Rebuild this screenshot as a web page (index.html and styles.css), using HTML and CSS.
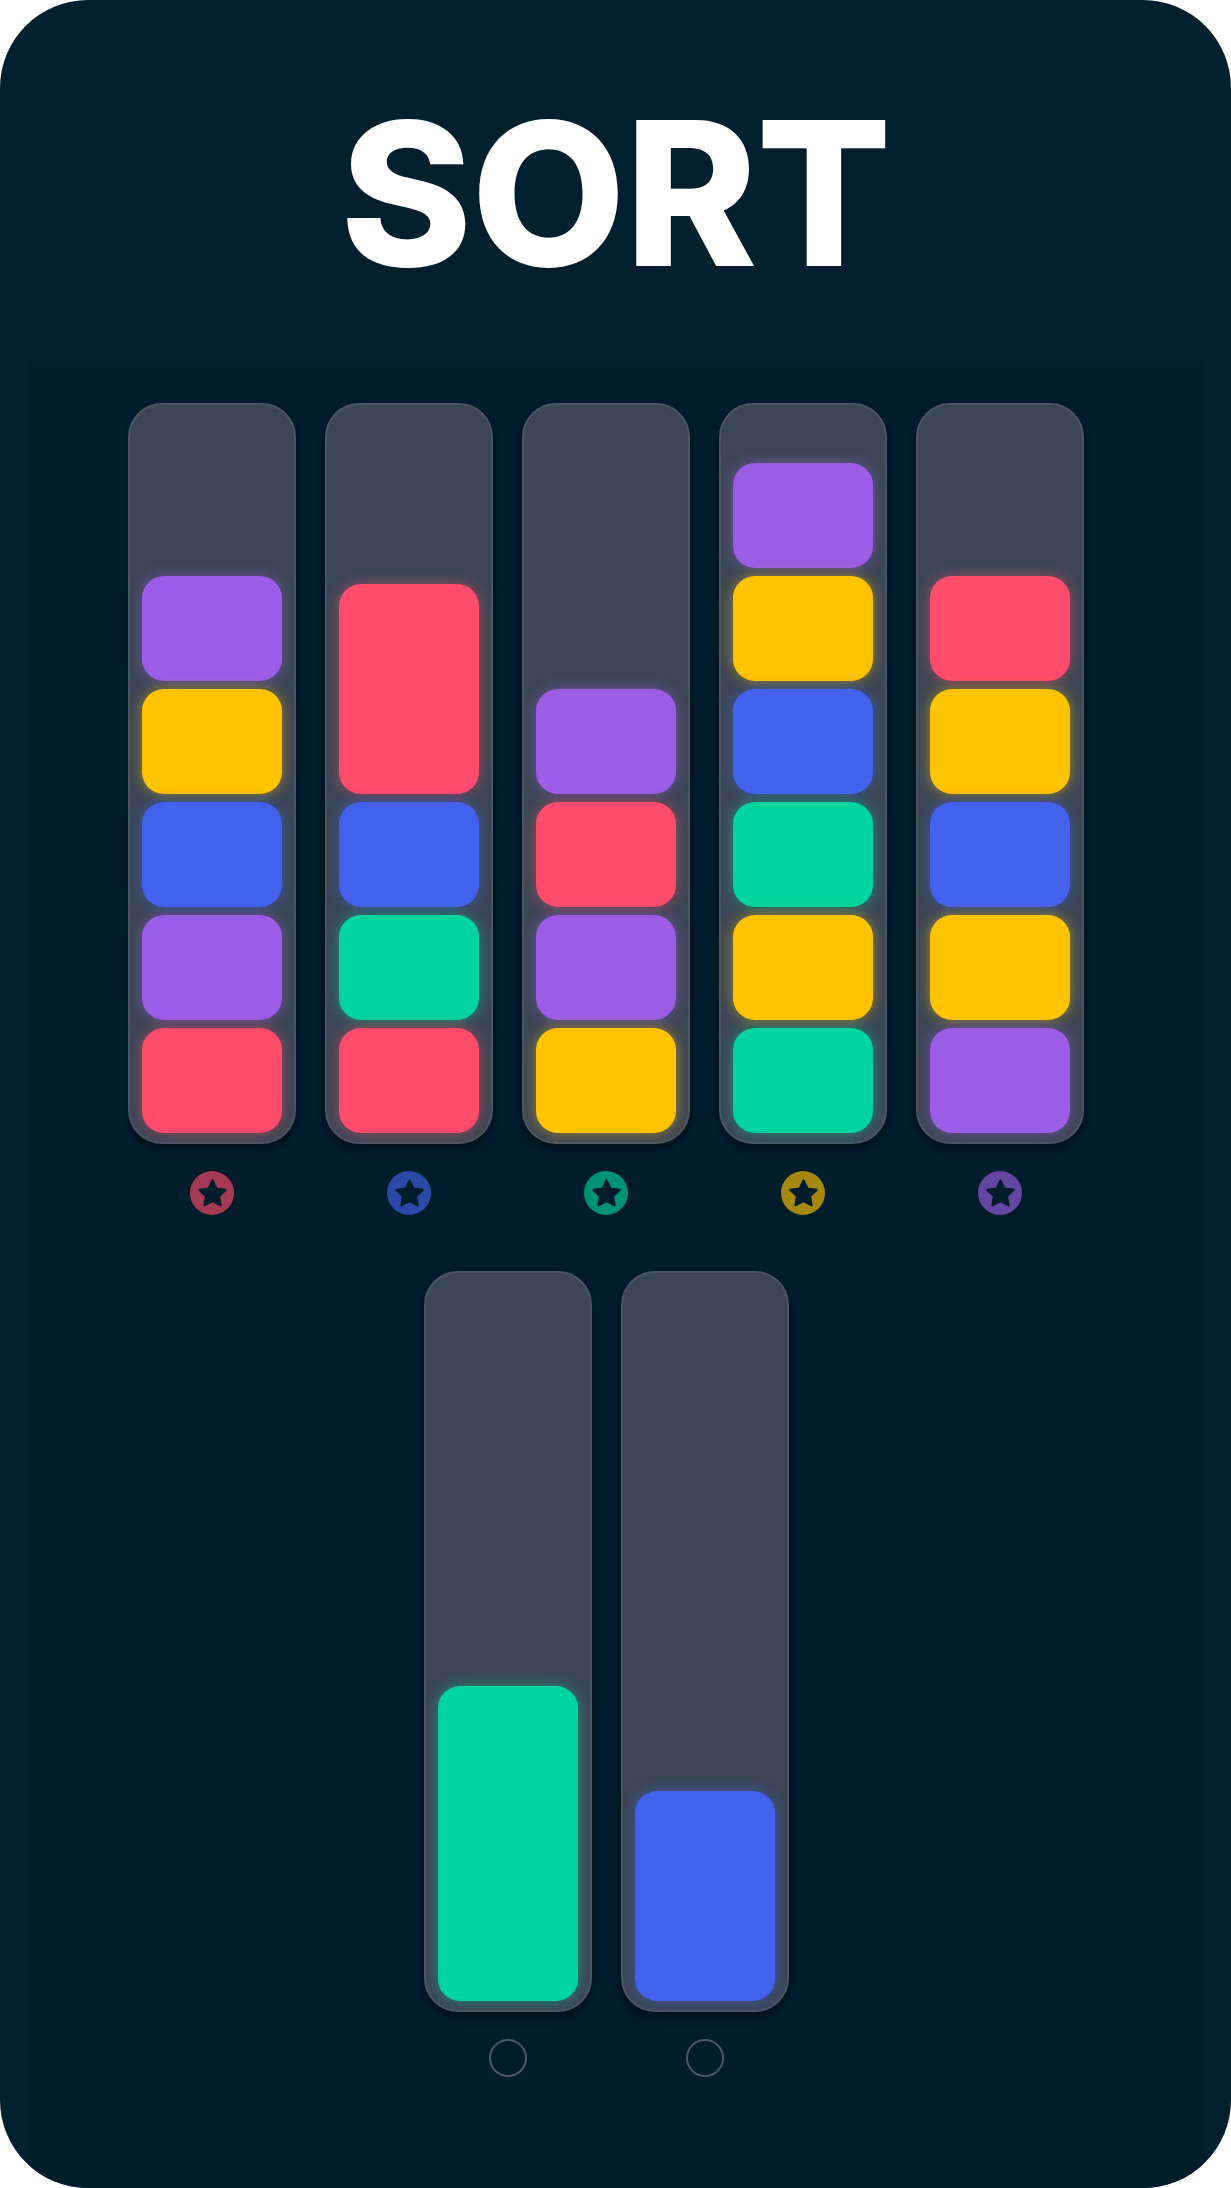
FILE: index.html
```html
<!DOCTYPE html>
<html lang="en">

<head>
  <meta charset="UTF-8">
  <meta name="viewport" content="width=device-width, initial-scale=1.0">
  <title>Sort</title>
  <link rel="stylesheet" href="styles.css">
</head>

<body>
  <div class="app">
    <header class="header">
      <h1>SORT</h1>
    </header>
    <main class="board">
      <div class="row">
        <div class="column">
          <div class="tube">
            <div class="block purple"></div>
            <div class="block yellow"></div>
            <div class="block blue"></div>
            <div class="block purple"></div>
            <div class="block red"></div>
          </div>
          <div class="badge red"><svg viewBox="0 0 24 24"><polygon points="12,2.5 14.9,8.5 21.5,9.4 16.7,14 17.9,20.6 12,17.5 6.1,20.6 7.3,14 2.5,9.4 9.1,8.5" /></svg></div>
        </div>
        <div class="column">
          <div class="tube">
            <div class="block red x2"></div>
            <div class="block blue"></div>
            <div class="block green"></div>
            <div class="block red"></div>
          </div>
          <div class="badge blue"><svg viewBox="0 0 24 24"><polygon points="12,2.5 14.9,8.5 21.5,9.4 16.7,14 17.9,20.6 12,17.5 6.1,20.6 7.3,14 2.5,9.4 9.1,8.5" /></svg></div>
        </div>
        <div class="column">
          <div class="tube">
            <div class="block purple"></div>
            <div class="block red"></div>
            <div class="block purple"></div>
            <div class="block yellow"></div>
          </div>
          <div class="badge green"><svg viewBox="0 0 24 24"><polygon points="12,2.5 14.9,8.5 21.5,9.4 16.7,14 17.9,20.6 12,17.5 6.1,20.6 7.3,14 2.5,9.4 9.1,8.5" /></svg></div>
        </div>
        <div class="column">
          <div class="tube">
            <div class="block purple"></div>
            <div class="block yellow"></div>
            <div class="block blue"></div>
            <div class="block green"></div>
            <div class="block yellow"></div>
            <div class="block green"></div>
          </div>
          <div class="badge yellow"><svg viewBox="0 0 24 24"><polygon points="12,2.5 14.9,8.5 21.5,9.4 16.7,14 17.9,20.6 12,17.5 6.1,20.6 7.3,14 2.5,9.4 9.1,8.5" /></svg></div>
        </div>
        <div class="column">
          <div class="tube">
            <div class="block red"></div>
            <div class="block yellow"></div>
            <div class="block blue"></div>
            <div class="block yellow"></div>
            <div class="block purple"></div>
          </div>
          <div class="badge purple"><svg viewBox="0 0 24 24"><polygon points="12,2.5 14.9,8.5 21.5,9.4 16.7,14 17.9,20.6 12,17.5 6.1,20.6 7.3,14 2.5,9.4 9.1,8.5" /></svg></div>
        </div>
      </div>
      <div class="row">
        <div class="column">
          <div class="tube">
            <div class="block green x3"></div>
          </div>
          <div class="slot"></div>
        </div>
        <div class="column">
          <div class="tube">
            <div class="block blue x2"></div>
          </div>
          <div class="slot"></div>
        </div>
      </div>
    </main>
  </div>
</body>

</html>
```

FILE: styles.css
```css
* {
  box-sizing: border-box;
}

body {
  --bg: #021f2e;
  --board: #011c2a;
  --red: #ff4b6c;
  --blue: #4262ee;
  --green: #00d49f;
  --yellow: #ffc400;
  --purple: #9b5ce6;
  margin: 0;
  background: #fff;
  font-family: Inter, "Noto Sans", sans-serif;
}

.app {
  width: 1231px;
  height: 2188px;
  display: flex;
  flex-direction: column;
  background: var(--bg);
  border-radius: 88px;
  overflow: hidden;
}

.header {
  height: 361px;
  padding-top: 93px;
}

h1 {
  margin: 0;
  font-size: 200px;
  line-height: 1;
  font-weight: 800;
  letter-spacing: -1px;
  text-align: center;
  color: #fff;
}

.board {
  flex: 1;
  margin: 0 28px;
  padding-top: 42px;
  background: var(--board);
  display: flex;
  flex-direction: column;
  gap: 56px;
}

.row {
  display: flex;
  justify-content: center;
  gap: 29px;
  padding-right: 19px;
}

.column {
  display: flex;
  flex-direction: column;
  align-items: center;
  gap: 27px;
}

.tube {
  width: 168px;
  height: 741px;
  display: flex;
  flex-direction: column;
  justify-content: flex-end;
  gap: 8px;
  padding: 0 12px 9px;
  background: #3c4755;
  border: 2px solid #4b5664;
  border-radius: 34px;
  box-shadow: 0 6px 10px rgba(0, 0, 0, 0.35);
}

.block {
  height: 105px;
  flex-shrink: 0;
  border-radius: 22px;
  background: var(--c);
  box-shadow: 0 0 14px color-mix(in srgb, var(--c) 50%, transparent);
}

.block.x2 {
  height: 210px;
}

.block.x3 {
  height: 315px;
}

.red {
  --c: var(--red);
}

.blue {
  --c: var(--blue);
}

.green {
  --c: var(--green);
}

.yellow {
  --c: var(--yellow);
}

.purple {
  --c: var(--purple);
}

.badge {
  width: 44px;
  height: 44px;
  border-radius: 50%;
  display: flex;
  align-items: center;
  justify-content: center;
  background: color-mix(in srgb, var(--c) 64%, var(--board));
}

.badge svg {
  width: 33px;
  height: 33px;
  flex-shrink: 0;
  fill: var(--board);
  stroke: var(--board);
  stroke-width: 1.6;
  stroke-linejoin: round;
}

.slot {
  width: 38px;
  height: 38px;
  border-radius: 50%;
  border: 2.5px solid #4b5664;
}
```
